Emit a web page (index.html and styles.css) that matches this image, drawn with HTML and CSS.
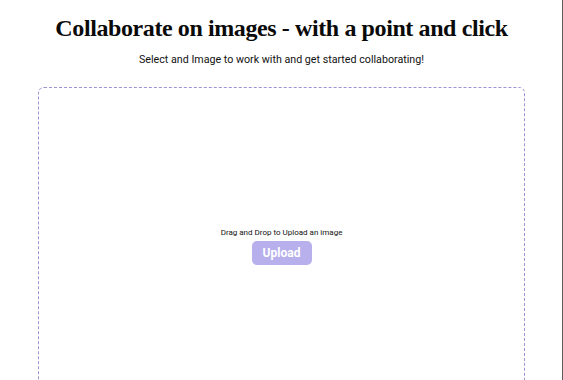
FILE: index.html
```html
<!DOCTYPE html>
<html>
<head>
<meta charset="utf-8">
<link rel="stylesheet" href="styles.css">
</head>
<body>
<main class="page">
  <h1 class="title">Collaborate on images - with a point and click</h1>
  <p class="subtitle">Select and Image to work with and get started collaborating!</p>
  <section class="dropzone">
    <p class="drop-text">Drag and Drop to Upload an image</p>
    <button class="upload-btn">Upload</button>
  </section>
</main>
</body>
</html>
```

FILE: styles.css
```css
html, body {
  margin: 0;
  padding: 0;
  background: #ffffff;
  overflow: hidden;
}
.page {
  box-sizing: border-box;
  min-height: 100vh;
  display: flex;
  flex-direction: column;
  align-items: center;
  padding: 13px 38px 0 38px;
  font-family: Roboto, "Liberation Sans", sans-serif;
  color: #111;
  box-shadow: inset -1px 0 0 #5c5c5c;
}
.title {
  margin: 0;
  font-family: "Liberation Serif", serif;
  font-weight: 700;
  font-size: 24px;
  letter-spacing: -0.4px;
  line-height: 31px;
  white-space: nowrap;
  color: #0a0a0a;
}
.subtitle {
  margin: 9px 0 0 0;
  font-size: 10.7px;
  line-height: 13px;
  color: #111;
}
.dropzone {
  margin-top: 21px;
  align-self: stretch;
  height: 316px;
  flex-shrink: 0;
  border: 1px dashed #9d94d6;
  border-radius: 6px;
  display: flex;
  flex-direction: column;
  align-items: center;
  justify-content: center;
}
.drop-text {
  margin: 0 0 1px 0;
  font-size: 8px;
  line-height: 10px;
  color: #111;
}
.upload-btn {
  margin-top: 2px;
  width: 60px;
  height: 24px;
  border: none;
  border-radius: 5px;
  background: #b7b0ec;
  color: #fff;
  font-family: Roboto, "Liberation Sans", sans-serif;
  font-weight: 700;
  font-size: 12px;
  padding: 0;
}
```
